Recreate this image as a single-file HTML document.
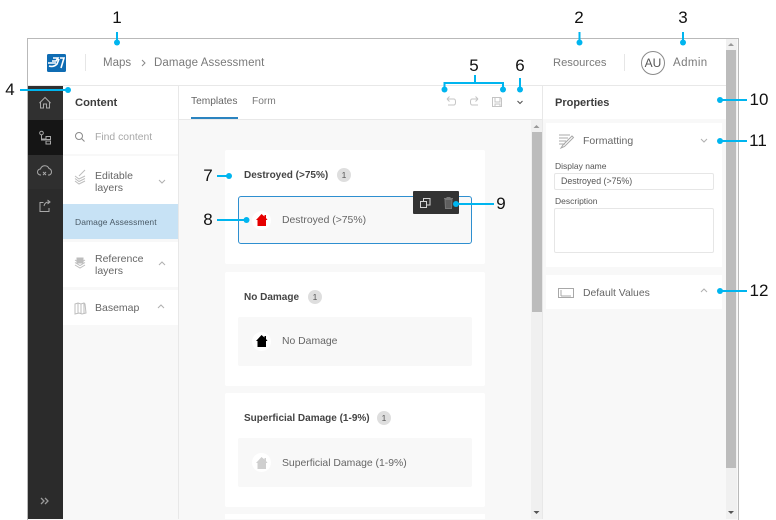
<!DOCTYPE html>
<html><head><meta charset="utf-8">
<style>
html,body{margin:0;padding:0;background:#fff}
#p{position:relative;width:776px;height:520px;overflow:hidden;font-family:"Liberation Sans",sans-serif;background:#fff}
.b{position:absolute}
.t{position:absolute;white-space:nowrap;line-height:14px}
.n{position:absolute;white-space:nowrap;font-size:17px;line-height:20px;color:#111;transform:translateX(-50%)}
svg{position:absolute;left:0;top:0}
</style></head><body><div id="p">
<!-- frame -->
<div class="b" style="left:27px;top:38px;width:710px;height:481px;border:1px solid #b9b9b9;background:#f8f8f8"></div>
<!-- header -->
<div class="b" style="left:28px;top:39px;width:698px;height:46px;background:#fff"></div>
<div class="b" style="left:28px;top:85px;width:698px;height:1px;background:#e8e8e8"></div>
<div class="b" style="left:85px;top:54px;width:1px;height:17px;background:#e6e6e6"></div>
<div class="b" style="left:624px;top:54px;width:1px;height:17px;background:#e6e6e6"></div>
<div class="t" style="left:103px;top:56px;font-size:11.5px;color:#7a7a7a">Maps</div>
<div class="t" style="left:154px;top:56px;font-size:11.5px;color:#7a7a7a;letter-spacing:.1px">Damage Assessment</div>
<div class="t" style="left:553px;top:56px;font-size:11.2px;color:#7a7a7a">Resources</div>
<div class="t" style="left:673px;top:56px;font-size:11.5px;color:#7a7a7a;letter-spacing:.4px">Admin</div>
<div class="b" style="left:641px;top:51px;width:22px;height:22px;border:1px solid #8a8a8a;border-radius:50%;font-size:12px;line-height:22px;text-align:center;color:#555">AU</div>
<!-- dark sidebar -->
<div class="b" style="left:28px;top:86px;width:35px;height:433px;background:#2b2b2b"></div>
<div class="b" style="left:28px;top:86px;width:35px;height:34px;background:#303030"></div>
<div class="b" style="left:28px;top:120px;width:35px;height:35px;background:#151515"></div>
<div class="b" style="left:28px;top:155px;width:35px;height:34px;background:#2f2f2f"></div>
<!-- content panel -->
<div class="b" style="left:63px;top:86px;width:115px;height:433px;background:#f8f8f8"></div>
<div class="b" style="left:178px;top:86px;width:1px;height:433px;background:#e8e8e8"></div>
<div class="b" style="left:63px;top:86px;width:115px;height:33px;background:#fff"></div>
<div class="b" style="left:63px;top:120px;width:115px;height:34px;background:#fff"></div>
<div class="b" style="left:63px;top:156px;width:115px;height:48px;background:#fff"></div>
<div class="b" style="left:63px;top:204px;width:115px;height:35px;background:#c7e2f5"></div>
<div class="b" style="left:63px;top:242px;width:115px;height:45px;background:#fff"></div>
<div class="b" style="left:63px;top:290px;width:115px;height:35px;background:#fff"></div>
<div class="t" style="left:75px;top:96px;font-size:11.2px;font-weight:bold;color:#3c3c3c">Content</div>
<div class="t" style="left:95px;top:131px;font-size:10.4px;color:#a8a8a8">Find content</div>
<div class="t" style="left:95px;top:170px;font-size:10.5px;line-height:12px;color:#666">Editable<br>layers</div>
<div class="t" style="left:75px;top:215px;font-size:8.5px;color:#4a5a66;letter-spacing:.08px">Damage Assessment</div>
<div class="t" style="left:95px;top:254px;font-size:10.5px;line-height:11.5px;color:#666">Reference<br>layers</div>
<div class="t" style="left:95px;top:301px;font-size:10.5px;color:#666">Basemap</div>
<!-- centre -->
<div class="b" style="left:179px;top:86px;width:363px;height:33px;background:#fff"></div>
<div class="b" style="left:179px;top:119px;width:363px;height:1px;background:#e8e8e8"></div>
<div class="b" style="left:191px;top:117px;width:47px;height:2px;background:#2b84c0"></div>
<div class="t" style="left:191px;top:94.500px;font-size:10.2px;color:#666">Templates</div>
<div class="t" style="left:252px;top:94.500px;font-size:10.2px;color:#7a7a7a">Form</div>
<div class="b" style="left:531px;top:120px;width:11px;height:399px;background:#f0f0f0"></div>
<div class="b" style="left:532px;top:132px;width:10px;height:180px;background:#bcbcbc"></div>
<div class="b" style="left:542px;top:86px;width:1px;height:433px;background:#e8e8e8"></div>
<!-- cards -->
<div class="b" style="left:225px;top:150px;width:260px;height:114px;background:#fff;border-radius:2px"></div>
<div class="b" style="left:225px;top:272px;width:260px;height:114px;background:#fff;border-radius:2px"></div>
<div class="b" style="left:225px;top:393px;width:260px;height:114px;background:#fff;border-radius:2px"></div>
<div class="b" style="left:225px;top:514px;width:260px;height:5px;background:#fff"></div>
<div class="b" style="left:238px;top:196px;width:232px;height:46px;background:#f8f8f8;border:1px solid #2e8fd0;border-radius:3px"></div>
<div class="b" style="left:238px;top:317px;width:234px;height:49px;background:#f8f8f8;border-radius:2px"></div>
<div class="b" style="left:238px;top:438px;width:234px;height:49px;background:#f8f8f8;border-radius:2px"></div>
<div class="t" style="left:244px;top:169px;font-size:10px;font-weight:bold;color:#444">Destroyed (&gt;75%)</div>
<div class="t" style="left:244px;top:291px;font-size:10px;font-weight:bold;color:#444">No Damage</div>
<div class="t" style="left:244px;top:412px;font-size:10px;font-weight:bold;color:#444">Superficial Damage (1-9%)</div>
<div class="b" style="left:337px;top:168px;width:14px;height:14px;border-radius:50%;background:#dedede;font-size:8.5px;line-height:14px;text-align:center;color:#555">1</div>
<div class="b" style="left:308px;top:290px;width:14px;height:14px;border-radius:50%;background:#dedede;font-size:8.5px;line-height:14px;text-align:center;color:#555">1</div>
<div class="b" style="left:377px;top:411px;width:14px;height:14px;border-radius:50%;background:#dedede;font-size:8.5px;line-height:14px;text-align:center;color:#555">1</div>
<div class="t" style="left:282px;top:214px;font-size:10.4px;color:#666">Destroyed (&gt;75%)</div>
<div class="t" style="left:282px;top:335px;font-size:10.4px;color:#666">No Damage</div>
<div class="t" style="left:282px;top:457px;font-size:10.4px;color:#666">Superficial Damage (1-9%)</div>
<div class="b" style="left:252px;top:211px;width:19px;height:19px;border-radius:50%;background:#fff"></div>
<div class="b" style="left:252px;top:332px;width:19px;height:19px;border-radius:50%;background:#fff"></div>
<div class="b" style="left:252px;top:453px;width:19px;height:19px;border-radius:50%;background:#fff"></div>
<div class="b" style="left:413px;top:191px;width:46px;height:23px;background:#333;border-radius:1px"></div>
<!-- right panel -->
<div class="b" style="left:543px;top:86px;width:183px;height:33px;background:#fff"></div>
<div class="b" style="left:546px;top:123px;width:176px;height:144px;background:#fff"></div>
<div class="b" style="left:546px;top:275px;width:176px;height:34px;background:#fff"></div>
<div class="t" style="left:555px;top:96px;font-size:11px;font-weight:bold;color:#3c3c3c">Properties</div>
<div class="t" style="left:583px;top:134px;font-size:10.5px;color:#666">Formatting</div>
<div class="t" style="left:555px;top:159px;font-size:8.500px;color:#555">Display name</div>
<div class="b" style="left:554px;top:173px;width:158px;height:15px;border:1px solid #e6e6e6;border-radius:2px;background:#fff"></div>
<div class="t" style="left:561px;top:174px;font-size:8.800px;color:#555">Destroyed (&gt;75%)</div>
<div class="t" style="left:555px;top:194px;font-size:8.500px;color:#555">Description</div>
<div class="b" style="left:554px;top:208px;width:158px;height:43px;border:1px solid #e6e6e6;border-radius:2px;background:#fff"></div>
<div class="t" style="left:583px;top:287px;font-size:10.4px;color:#666">Default Values</div>
<!-- right scrollbar -->
<div class="b" style="left:726px;top:39px;width:11px;height:480px;background:#f0f0f0"></div>
<div class="b" style="left:726px;top:50px;width:10px;height:418px;background:#bcbcbc"></div>

<svg width="776" height="520" viewBox="0 0 776 520" fill="none">
<!-- logo -->
<rect x="47" y="54" width="19" height="18" rx="1.500" fill="#0f6cb3"/>
<path d="M53 58h5l-2 3h-4M49 66c3 1 6 0 8-2l2-5M60 58h4l-3 10M48 63h8" stroke="#fff" stroke-width="1.600"/>
<!-- breadcrumb chevron -->
<path d="M142 60l3 3-3 3" stroke="#888" stroke-width="1"/>
<!-- sidebar icons -->
<g stroke="#a9a9a9" stroke-width="1">
<path d="M40.500 108v-5.500l-1 .5 5.500-5.500 5.500 5.500-1-.5V108h-3v-4h-3v4z"/>
<circle cx="41.500" cy="133" r="1.800"/><path d="M41.500 135v4h4M41.500 139v1h4"/><rect x="46" y="136.500" width="4.500" height="3"/><rect x="46" y="141" width="4.500" height="3"/>
<path d="M41 175h-.5a3 3 0 0 1 0-6 4.500 4.500 0 0 1 8.500-.5 3.500 3.500 0 0 1 .5 6.500H48M43 172l3 3m0-3l-3 3"/>
<path d="M49 208v3.500H40V202.500h3.500M44 206c.5-3 2.500-4 5-4M47.500 200l2.500 2-2.500 2"/>
</g>
<path d="M41 498l3 3-3 3M45 498l3 3-3 3" stroke="#9a9a9a" stroke-width="1.300"/>
<!-- content icons -->
<circle cx="79" cy="136" r="3.500" stroke="#8a8a8a"/><path d="M81.500 138.500l3 3" stroke="#8a8a8a"/>
<g stroke="#bdbdbd">
<path d="M75 181l4 3 6-3M75 178.500l4 3 6-3M75 176l4 3 6-3M79 176l6-6"/>
<path d="M75 265l5 3 5-3M75 262.500l5 3 5-3M75 260l5 3 5-3"/><rect x="77" y="258" width="6" height="5" fill="#bdbdbd"/>
<path d="M75 304l3-1 3 1 3-1 1 1 1 9-4 1-3-1-4 1zM78 303v10M81 304v10M84 303v10"/>
</g>
<g stroke="#b0b0b0" stroke-width="1">
<path d="M159 180l3 3 3-3"/><path d="M159 265l3-3 3 3"/><path d="M158 308l3-3 3 3"/>
<path d="M701 139l3 3 3-3"/><path d="M701 292l3-3 3 3"/>
</g>
<!-- toolbar -->
<g stroke="#c4c4c4" stroke-width="1">
<path d="M447 99h7c2 0 2 6 0 6h-6M447 99l2.500-2.500M447 99l2.500 2.500"/>
<path d="M478 99h-6c-2 0-2 6 0 6h6M478 99l-2.500-2.500M478 99l-2.500 2.500"/>
<path d="M492.500 97.500h8l1 1v8h-9zM495 98v4h5v-4M495 107v-3h5v3"/>
</g>
<path d="M517.500 101l2.500 2.500 2.500-2.500" stroke="#555" stroke-width="1.100"/>
<!-- scroll arrows -->
<path d="M533.500 128l3-3 3 3z" fill="#999"/>
<path d="M533.500 511l3 3 3-3z" fill="#555"/>
<path d="M728 46l3-3 3 3z" fill="#999"/>
<path d="M728 511l3 3 3-3z" fill="#555"/>
<!-- house symbols -->
<path d="M257.500 226v-6H256l5.500-6 3 2.500V215h1.500v3l1.500 2h-1.500v6z" fill="#e60000"/>
<path d="M257.500 347v-6H256l5.500-6 3 2.500V336h1.500v3l1.500 2h-1.500v6z" fill="#000"/>
<path d="M257.500 469v-6H256l5.500-6 3 2.500V458h1.500v3l1.500 2h-1.500v6z" fill="#cfcfcf"/>
<!-- toolbar on item -->
<g stroke="#d6d6d6">
<rect x="420.500" y="201.500" width="6" height="6"/><path d="M423.500 201.500v-3h6.500v6.500h-3.500"/>
</g>
<path d="M445 199.500h7l-.5 9h-6zM444 198.500h9M446.500 197.500h4" stroke="#777" fill="#5f5f5f"/>
<!-- properties icons -->
<g stroke="#a8a8a8">
<path d="M559 135h11M559 138h9M559 141h7M559 144h6M561 148l2-3 9-9 1.500 1.500-9 9z"/>
<rect x="558.500" y="288.500" width="15" height="9"/><path d="M561 290v6M561 296h10"/>
</g>
<!-- annotations -->
<g stroke="#00b5ef" stroke-width="2" fill="#00b5ef">
<path d="M117 32v10M579.500 32v10M683 32v10" fill="none"/>
<path d="M20 90h48M217 176h12M217 220h30M456 204h38M720 100h27M720 141h27M720 291h27" fill="none"/>
<path d="M444.500 89v-6h58.500v6M475 75v8M520 78v11" fill="none"/>
<g stroke="none">
<circle cx="117" cy="42.500" r="3"/><circle cx="579.500" cy="42.500" r="3"/><circle cx="683" cy="42.500" r="3"/>
<circle cx="68" cy="90" r="3"/><circle cx="229" cy="176" r="3"/><circle cx="246.500" cy="220" r="3"/>
<circle cx="456" cy="204" r="3"/><circle cx="720" cy="100" r="3"/><circle cx="720" cy="141" r="3"/><circle cx="720" cy="291" r="3"/>
<circle cx="444.500" cy="89.500" r="3"/><circle cx="503" cy="89.500" r="3"/><circle cx="520" cy="89.500" r="3"/>
</g></g>
</svg>
<div class="n" style="left:117px;top:8px">1</div>
<div class="n" style="left:579px;top:8px">2</div>
<div class="n" style="left:683px;top:8px">3</div>
<div class="n" style="left:10px;top:80px">4</div>
<div class="n" style="left:474px;top:56px">5</div>
<div class="n" style="left:520px;top:56px">6</div>
<div class="n" style="left:208px;top:166px">7</div>
<div class="n" style="left:208px;top:210px">8</div>
<div class="n" style="left:501px;top:194px">9</div>
<div class="n" style="left:759px;top:90px">10</div>
<div class="n" style="left:758px;top:131px">11</div>
<div class="n" style="left:759px;top:281px">12</div>
</div></body></html>
